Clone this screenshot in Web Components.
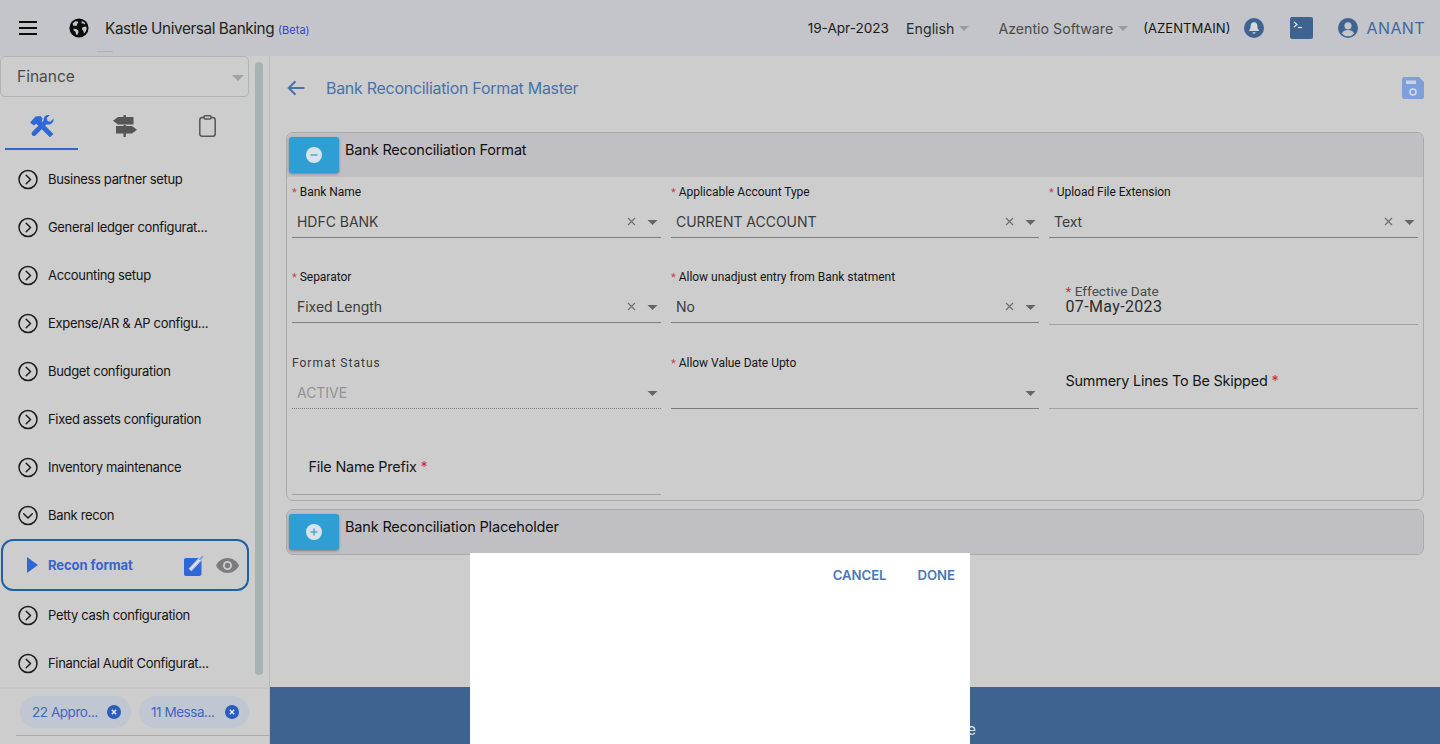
<!DOCTYPE html>
<html>
<head>
<meta charset="utf-8">
<title>Bank Reconciliation Format Master</title>
<style>
html, body { margin: 0; height: 100%; overflow: hidden; }
body { background: #cdcdcd; font-family: Inter, "Liberation Sans", sans-serif; color: #111; }
</style>
</head>
<body>
<app-shell></app-shell>
<script>
const ICONS = {
  chevronRight: `<svg width="21" height="21" viewBox="0 0 21 21" fill="none" stroke="#1c1c1c" stroke-width="1.5"><circle cx="10" cy="10.5" r="9"/><path d="M8.200 6.200l4.300 4.300-4.300 4.300" stroke-linecap="round" stroke-linejoin="round"/></svg>`,
  chevronDown: `<svg width="21" height="21" viewBox="0 0 21 21" fill="none" stroke="#1c1c1c" stroke-width="1.5"><circle cx="10" cy="10.5" r="9"/><path d="M5.700 8.700l4.300 4.300 4.300-4.300" stroke-linecap="round" stroke-linejoin="round"/></svg>`,
  caret: `<svg width="12" height="6" viewBox="0 0 12 6"><path d="M0 0h12L6 6z" fill="currentColor"/></svg>`,
  x: `<svg width="9" height="9" viewBox="0 0 9 9" fill="none" stroke="#707070" stroke-width="1.2"><path d="M1 1l7 7M8 1L1 8"/></svg>`
};

// top bar
const $headerTpl = document.createElement("template");
$headerTpl.innerHTML = `
<style>
:host { display: flex; align-items: center; height: 56px; background: #c4c5ca; position: relative; font-size: 14px; }
.menu { margin-left: 19px; width: 18px; height: 14px; display: flex; flex-direction: column; justify-content: space-between; }
.menu i { display: block; height: 2px; background: #0b0b0b; }
.globe { margin-left: 32px; display: flex; }
.brand { margin-left: 16px; font-size: 15.3px; letter-spacing: -.4px; color: #222; white-space: nowrap; }
.brand small { font-size: 11px; letter-spacing: 0; color: #3a3fd0; }
.right { margin-left: auto; display: flex; align-items: center; height: 100%; padding-right: 15px; white-space: nowrap; }
.date { font-size: 13.6px; color: #1a1a1a; }
.lang { margin-left: 17px; color: #2b2b2b; font-size: 14.2px; display: flex; align-items: center; gap: 5px; }
.org { margin-left: 29px; color: #4b4b4b; font-size: 14.2px; display: flex; align-items: center; gap: 5px; }
.caret { color: #9b9b9e; display: flex; }
.code { margin-left: 15px; font-size: 13.1px; color: #151515; }
.bell { margin-left: 14px; display: flex; }
.term { margin-left: 26px; display: flex; }
.user { margin-left: 25px; display: flex; }
.name { margin-left: 8px; font-size: 16px; color: #45689a; letter-spacing: .4px; }
.mark { position: absolute; left: 97px; top: 51px; width: 16px; height: 1px; background: #b2b3b8; }
</style>
<div class="menu"><i></i><i></i><i></i></div>
<div class="globe">
  <svg width="20" height="20" viewBox="0 0 20 20"><circle cx="10" cy="10" r="9.6" fill="#0c0c0c"/><path d="M3.600 5.600l2.600-2.400 2.600.4.500 1.400-1.500 1 .6 1.200-1.500.8-1-.6-1.400.6zM4.500 10.800l2.800.2 2 1.600.2 1.800-1.200 2.600-1.200-.5-.6-2.800-1.800-1.300zM12.600 3l2.400.9 1.400 2-1.500.3-.8-1-1.400.2zM13.400 9.200l3.600-.6.8 1.800-1.100 3.200-1.800 1.800-.5-2.600-1.400-1.400z" fill="#c4c5ca"/></svg>
</div>
<div class="brand">Kastle Universal Banking <small>(Beta)</small></div>
<div class="right">
  <span class="date">19-Apr-2023</span>
  <span class="lang">English <span class="caret">${ICONS.caret.replace('width="12" height="6"', 'width="10" height="5"')}</span></span>
  <span class="org">Azentio Software <span class="caret">${ICONS.caret.replace('width="12" height="6"', 'width="10" height="5"')}</span></span>
  <span class="code">(AZENTMAIN)</span>
  <span class="bell">
    <svg width="20" height="20" viewBox="0 0 20 20"><circle cx="10" cy="10" r="10" fill="#3e6391"/><path d="M10 4.200c-2.200 0-3.400 1.700-3.400 3.700 0 2.600-.7 3.400-1.500 4.300v.8h9.800v-.8c-.8-.9-1.500-1.700-1.500-4.300 0-2-1.200-3.700-3.400-3.700zM8.500 14.200a1.500 1.500 0 0 0 3 0z" fill="#d5d7dc"/></svg>
  </span>
  <span class="term">
    <svg width="23" height="22" viewBox="0 0 23 22"><rect width="23" height="22" rx="2" fill="#3e6391"/><path d="M4 5l3 2.500-3 2.500" fill="none" stroke="#dfe3ea" stroke-width="1.2"/><path d="M8 10.500h4" stroke="#dfe3ea" stroke-width="1.2"/></svg>
  </span>
  <span class="user">
    <svg width="20" height="20" viewBox="0 0 20 20"><circle cx="10" cy="10" r="10" fill="#3e6391"/><circle cx="10" cy="7.800" r="3.600" fill="#c4c5ca"/><path d="M3.800 15.500c1-2.600 3.500-3.600 6.200-3.600s5.200 1 6.200 3.600A8 8 0 0 1 10 18.300a8 8 0 0 1-6.200-2.800z" fill="#c4c5ca"/></svg>
  </span>
  <span class="name">ANANT</span>
</div>
<div class="mark"></div>
`;
class AppHeader extends HTMLElement {
  constructor() {
    super();
    this.attachShadow({ mode: "open" }).appendChild($headerTpl.content.cloneNode(true));
  }
}

// one row of the side menu
class NavItem extends HTMLElement {
  constructor() {
    super();
    const open = this.hasAttribute("open");
    const active = this.hasAttribute("active");
    const root = this.attachShadow({ mode: "open" });
    root.innerHTML = `
<style>
:host { display: flex; align-items: center; height: 48px; padding-left: 18px; box-sizing: border-box; font-size: 13px; letter-spacing: -.33px; color: #141414; white-space: nowrap; }
:host([active]) { height: 52px; margin: 0 0 0 1px; padding-left: 15px; border: 2px solid #1c62a8; border-radius: 12px; color: #3566cf; font-weight: 700; letter-spacing: -.05px; }
.ico { width: 21px; height: 21px; display: flex; align-items: center; justify-content: center; margin-right: 9px; }
.ico .tri { margin-left: 7px; }
.tools { margin-left: auto; display: flex; align-items: center; gap: 11px; padding-right: 8px; }
</style>
<span class="ico">${active
  ? `<svg class="tri" width="11" height="16" viewBox="0 0 11 16"><path d="M0 0l11 8L0 16z" fill="#2f68d6"/></svg>`
  : open ? ICONS.chevronDown : ICONS.chevronRight}</span>
<slot></slot>
${active ? `<span class="tools">
  <svg width="21" height="21" viewBox="0 0 21 21"><rect x="0" y="3" width="17.500" height="18" rx="2" fill="#2f68d6"/><path d="M6 15L18.800 1.400" stroke="#cdcdcd" stroke-width="4"/><path d="M6 15L18.800 1.400" stroke="#7f9fe0" stroke-width="2"/><path d="M6.300 14.700L15.500 4.900" stroke="#e4e9f5" stroke-width="1.800"/></svg>
  <svg width="23" height="15" viewBox="0 0 23 15"><path d="M11.500 0C6.300 0 2 3.200 0 7.500 2 11.800 6.300 15 11.500 15S21 11.800 23 7.500C21 3.200 16.700 0 11.500 0z" fill="#7c7c7e"/><circle cx="11.500" cy="7.500" r="3.600" fill="none" stroke="#cdcdcd" stroke-width="1.800"/></svg>
</span>` : ""}
`;
  }
}

class InfoChip extends HTMLElement {
  constructor() {
    super();
    this.attachShadow({ mode: "open" }).innerHTML = `
<style>
:host { display: flex; align-items: center; justify-content: space-between; box-sizing: border-box; height: 32px; padding: 0 10px 0 12px; background: #c1c7d2; border-radius: 16px; color: #4365c4; font-size: 13.5px; letter-spacing: -.45px; white-space: nowrap; }
svg { display: block; }
</style>
<slot></slot>
<svg width="14" height="14" viewBox="0 0 14 14"><circle cx="7" cy="7" r="7" fill="#2a5cbd"/><path d="M4.800 4.800l4.400 4.400M9.200 4.800l-4.400 4.400" stroke="#e6e9f0" stroke-width="1.400"/></svg>
`;
  }
}

// left column
const $sideTpl = document.createElement("template");
$sideTpl.innerHTML = `
<style>
:host { display: flex; flex-direction: column; width: 270px; box-sizing: border-box; border-right: 1px solid #bcbcbc; min-height: 0; }
.scroll { flex: 1; display: flex; min-height: 0; }
.col { width: 249px; flex: none; }
.thumb { width: 8px; margin: 6px 0 12px 6px; background: #a9b2b3; border-radius: 4px; }
.module { display: flex; align-items: center; justify-content: space-between; box-sizing: border-box; height: 41px; border: 1px solid #b2b2b2; border-radius: 5px; padding: 0 4px 0 16px; font-size: 15.5px; color: #4b4b4b; }
.module span { color: #a2a2a2; display: flex; padding-top: 2px; }
.tabs { display: flex; height: 51px; margin-left: 5px; margin-top: 2px; width: 244px; }
.tab { flex: 0 0 73px; margin-right: 10px; display: flex; align-items: center; justify-content: center; box-sizing: border-box; padding-top: 5px; border-bottom: 2px solid transparent; }
.tab.on { border-bottom-color: #2f68d6; }
.tab:last-child { margin-right: 0; }
.items { padding-top: 5px; }
.foot { height: 57px; box-sizing: border-box; border-top: 2px solid #c7c7c7; padding: 7px 0 0 20px; }
.chips { display: flex; gap: 8px; }
.line { height: 1px; background: #a9a9a9; margin: 7px 0 0 -4px; }
</style>
<div class="scroll">
  <div class="col">
    <div class="module">Finance <span>${ICONS.caret}</span></div>
    <div class="tabs">
      <div class="tab on">
        <svg width="24" height="22" viewBox="0 0 24 22">
          <path d="M9.500 8.500L20 19" stroke="#2f68d6" stroke-width="4.800" stroke-linecap="square"/>
          <path d="M0 7.500L5.500 1.500l5-.5 2 2.500-1 4-3 3-2-2-2.500 2z" fill="#2f68d6"/>
          <path d="M4 18.500L14.500 8" stroke="#2f68d6" stroke-width="4.800" stroke-linecap="round"/>
          <path d="M23.500 3.500l-3.200 3.200-2.800-.8-.8-2.800L20 0c-3.200-.6-6 1-6.400 3.800-.3 2 .4 3.800 1.700 4.900 1.700 1.100 3.800 1.100 5.500.2 2.200-1.200 3.200-3.200 2.700-5.400z" fill="#2f68d6"/>
        </svg>
      </div>
      <div class="tab">
        <svg width="24" height="22" viewBox="0 0 24 22"><path d="M10.500 0h2.400v2h7.600v7.500H5L0 5.800 5 2h5.500zM3 11h7.500v-1h2.400v1H19l5 3.800-5 3.700h-6.100V22h-2.400v-3.500H3z" fill="#565656"/></svg>
      </div>
      <div class="tab">
        <svg width="17" height="22" viewBox="0 0 17 22" fill="none" stroke="#565656" stroke-width="1.500"><rect x=".8" y="2.500" width="15.400" height="18.700" rx="2.500"/><rect x="5" y=".8" width="7" height="3.200" rx="1" fill="#cdcdcd"/></svg>
      </div>
    </div>
    <div class="items"><slot></slot></div>
  </div>
  <div class="thumb"></div>
</div>
<div class="foot">
  <div class="chips"><slot name="chips"></slot></div>
  <div class="line"></div>
</div>
`;
class SideNav extends HTMLElement {
  constructor() {
    super();
    this.attachShadow({ mode: "open" }).appendChild($sideTpl.content.cloneNode(true));
  }
}

// dropdown with a label above the value
class SelectField extends HTMLElement {
  constructor() {
    super();
    const label = this.getAttribute("label");
    const value = this.getAttribute("value") || "";
    const disabled = this.hasAttribute("disabled");
    const required = !disabled;
    this.attachShadow({ mode: "open" }).innerHTML = `
<style>
:host { display: flex; flex-direction: column; justify-content: flex-end; font-family: Roboto, "Liberation Sans", sans-serif; }
.label { font-size: 12px; line-height: 14px; height: 14px; margin-bottom: 9px; color: #151515; letter-spacing: -.03px; white-space: nowrap; }
:host([disabled]) .label { letter-spacing: 1px; color: #3a3a3a; }
.label b { font-weight: 400; color: #c2405a; margin-right: 3px; font-size: 11px; }
.row { display: flex; align-items: center; height: 30px; box-sizing: border-box; border-bottom: 1px solid #7d7d7d; padding: 0 3px 2px 5px; font-family: Inter, "Liberation Sans", sans-serif; font-size: 14px; letter-spacing: -.03px; color: #3b3b3b; }
:host([disabled]) .row { border-bottom: 1px dotted #7d7d7d; color: #939393; }
.val { flex: 1; white-space: nowrap; }
.x { display: flex; margin-right: 11px; }
.caret { display: flex; color: #666; padding-top: 2px; }
</style>
<div class="label">${required ? "<b>*</b>" : ""}${label}</div>
<div class="row">
  <span class="val">${value}</span>
  ${value && !disabled ? `<span class="x">${ICONS.x}</span>` : ""}
  <span class="caret">${ICONS.caret.replace('width="12" height="6"', 'width="11" height="5"')}</span>
</div>
`;
  }
}

// plain input, placeholder or floated label
class TextField extends HTMLElement {
  constructor() {
    super();
    const label = this.getAttribute("label");
    const value = this.getAttribute("value");
    this.attachShadow({ mode: "open" }).innerHTML = `
<style>
:host { display: flex; flex-direction: column; justify-content: flex-end; }
.box { box-sizing: border-box; border-bottom: 1px solid #a2a2a2; padding-left: 16.5px; }
.ph { font-size: 14.4px; line-height: 18px; height: 19px; padding-bottom: 17px; letter-spacing: -.2px; color: #161616; white-space: nowrap; }
.ph b { color: #cf3045; font-weight: 400; }
.fl { font-family: Roboto, "Liberation Sans", sans-serif; font-size: 13.6px; line-height: 15px; margin-bottom: -2px; color: #4a4a4a; white-space: nowrap; }
.fl b { color: #cf3045; font-weight: 400; }
.val { font-family: Roboto, "Liberation Sans", sans-serif; font-size: 16px; line-height: 19px; height: 27px; color: #2d2d2d; letter-spacing: .35px; }
</style>
<div class="box">
  ${value
    ? `<div class="fl"><b>*</b> ${label}</div><div class="val">${value}</div>`
    : `<div class="ph">${label} <b>*</b></div>`}
</div>
`;
  }
}

// collapsible section with the blue toggle
class AccordionPanel extends HTMLElement {
  constructor() {
    super();
    const expanded = this.hasAttribute("expanded");
    this.attachShadow({ mode: "open" }).innerHTML = `
<style>
:host { display: block; box-sizing: border-box; border: 1px solid #a9a9a9; border-radius: 7px; overflow: hidden; }
.head { position: relative; display: flex; height: 44px; background: #c0bfc4; padding: 4px 0 0 2px; box-sizing: border-box; }
.toggle { width: 50px; height: 36px; background: #2f9fd3; border-radius: 3px; box-shadow: 0 1px 3px rgba(0,0,0,.35); display: flex; align-items: center; justify-content: center; }
.title { margin-left: 6px; font-size: 14.5px; line-height: 25px; letter-spacing: -.17px; color: #111; white-space: nowrap; }
</style>
<div class="head">
  <div class="toggle">
    <svg width="16" height="16" viewBox="0 0 16 16"><circle cx="8" cy="8" r="8" fill="#d9e4ea"/><path d="M4.500 8h7${expanded ? "" : "M8 4.500v7"}" stroke="#4aa9d6" stroke-width="1.6"/></svg>
  </div>
  <div class="title">${this.getAttribute("heading")}</div>
</div>
<slot></slot>
`;
  }
}

class FormGrid extends HTMLElement {
  constructor() {
    super();
    this.attachShadow({ mode: "open" }).innerHTML = `
<style>
:host { display: grid; grid-template-columns: 369px 368px 369px; column-gap: 10px; grid-template-rows: 61px 85px 86px 86px; padding: 0 5px 5px; box-sizing: border-box; }
</style>
<slot></slot>
`;
  }
}

class ActionDialog extends HTMLElement {
  constructor() {
    super();
    this.attachShadow({ mode: "open" }).innerHTML = `
<style>
:host { position: absolute; left: 470px; top: 553px; width: 500px; height: 191px; background: #fff; display: flex; justify-content: flex-end; box-sizing: border-box; padding: 15px 15px 0 0; gap: 31px; }
span { font-size: 13.2px; line-height: 15px; height: 15px; font-weight: 600; color: #4a78b5; font-family: Inter, "Liberation Sans", sans-serif; letter-spacing: -.05px; }
</style>
<span>CANCEL</span><span>DONE</span>
`;
  }
}

const $shellTpl = document.createElement("template");
$shellTpl.innerHTML = `
<style>
:host { display: flex; flex-direction: column; height: 744px; position: relative; overflow: hidden; }
.body { flex: 1; display: flex; min-height: 0; }
.main { flex: 1; display: flex; flex-direction: column; min-width: 0; }
.content { flex: 1; padding: 0 16px 0 16px; }
.title { display: flex; align-items: center; height: 64px; padding-bottom: 12px; }
.title h1 { margin: 0 0 0 22px; font-size: 16px; font-weight: 400; letter-spacing: -.29px; color: #4a72a8; white-space: nowrap; }
.title svg.save { margin-left: auto; }
.panels { display: flex; flex-direction: column; gap: 8px; }
.footer { height: 57px; background: #3e6390; display: flex; align-items: flex-end; justify-content: flex-end; color: #d8dde5; font-size: 15px; padding: 0 464px 5px 0; box-sizing: border-box; }
</style>
<app-header></app-header>
<div class="body">
  <side-nav>
    <nav-item>Business partner setup</nav-item>
    <nav-item>General ledger configurat...</nav-item>
    <nav-item>Accounting setup</nav-item>
    <nav-item>Expense/AR &amp; AP configu...</nav-item>
    <nav-item>Budget configuration</nav-item>
    <nav-item>Fixed assets configuration</nav-item>
    <nav-item>Inventory maintenance</nav-item>
    <nav-item open>Bank recon</nav-item>
    <nav-item active>Recon format</nav-item>
    <nav-item>Petty cash configuration</nav-item>
    <nav-item>Financial Audit Configurat...</nav-item>
    <info-chip slot="chips" style="width:111px">22 Appro...</info-chip>
    <info-chip slot="chips" style="width:110px">11 Messa...</info-chip>
  </side-nav>
  <div class="main">
    <div class="content">
      <div class="title">
        <svg style="margin-left:1px" width="18" height="16" viewBox="0 0 18 16" fill="none" stroke="#4a72a8" stroke-width="2"><path d="M17.500 8H2M8.500 1.200L1.700 8l6.800 6.800"/></svg>
        <h1 style="margin-left:21px">Bank Reconciliation Format Master</h1>
        <svg class="save" width="22" height="22" viewBox="0 0 22 22"><path d="M2.500 0H17l5 5v14.500a2.500 2.500 0 0 1-2.500 2.500h-17A2.500 2.500 0 0 1 0 19.500v-17A2.500 2.500 0 0 1 2.500 0z" fill="#7f9fd8"/><rect x="4" y="3.500" width="10" height="3.500" fill="#c9d3e4"/><circle cx="11" cy="15" r="3" fill="none" stroke="#d3dae6" stroke-width="1.5"/></svg>
      </div>
      <div class="panels">
        <accordion-panel expanded heading="Bank Reconciliation Format">
          <form-grid>
            <select-field label="Bank Name" value="HDFC BANK"></select-field>
            <select-field label="Applicable Account Type" value="CURRENT ACCOUNT"></select-field>
            <select-field label="Upload File Extension" value="Text"></select-field>
            <select-field label="Separator" value="Fixed Length"></select-field>
            <select-field label="Allow unadjust entry from Bank statment" value="No"></select-field>
            <text-field label="Effective Date" value="07-May-2023" style="margin-bottom:-2px"></text-field>
            <select-field label="Format Status" value="ACTIVE" disabled></select-field>
            <select-field label="Allow Value Date Upto"></select-field>
            <text-field label="Summery Lines To Be Skipped"></text-field>
            <text-field label="File Name Prefix"></text-field>
          </form-grid>
        </accordion-panel>
        <accordion-panel heading="Bank Reconciliation Placeholder"></accordion-panel>
      </div>
    </div>
    <div class="footer"><span>e</span></div>
  </div>
</div>
<action-dialog></action-dialog>
`;
class AppShell extends HTMLElement {
  constructor() {
    super();
    this.attachShadow({ mode: "open" }).appendChild($shellTpl.content.cloneNode(true));
  }
}

customElements.define("app-header", AppHeader);
customElements.define("nav-item", NavItem);
customElements.define("info-chip", InfoChip);
customElements.define("side-nav", SideNav);
customElements.define("select-field", SelectField);
customElements.define("text-field", TextField);
customElements.define("accordion-panel", AccordionPanel);
customElements.define("form-grid", FormGrid);
customElements.define("action-dialog", ActionDialog);
customElements.define("app-shell", AppShell);
</script>
</body>
</html>
